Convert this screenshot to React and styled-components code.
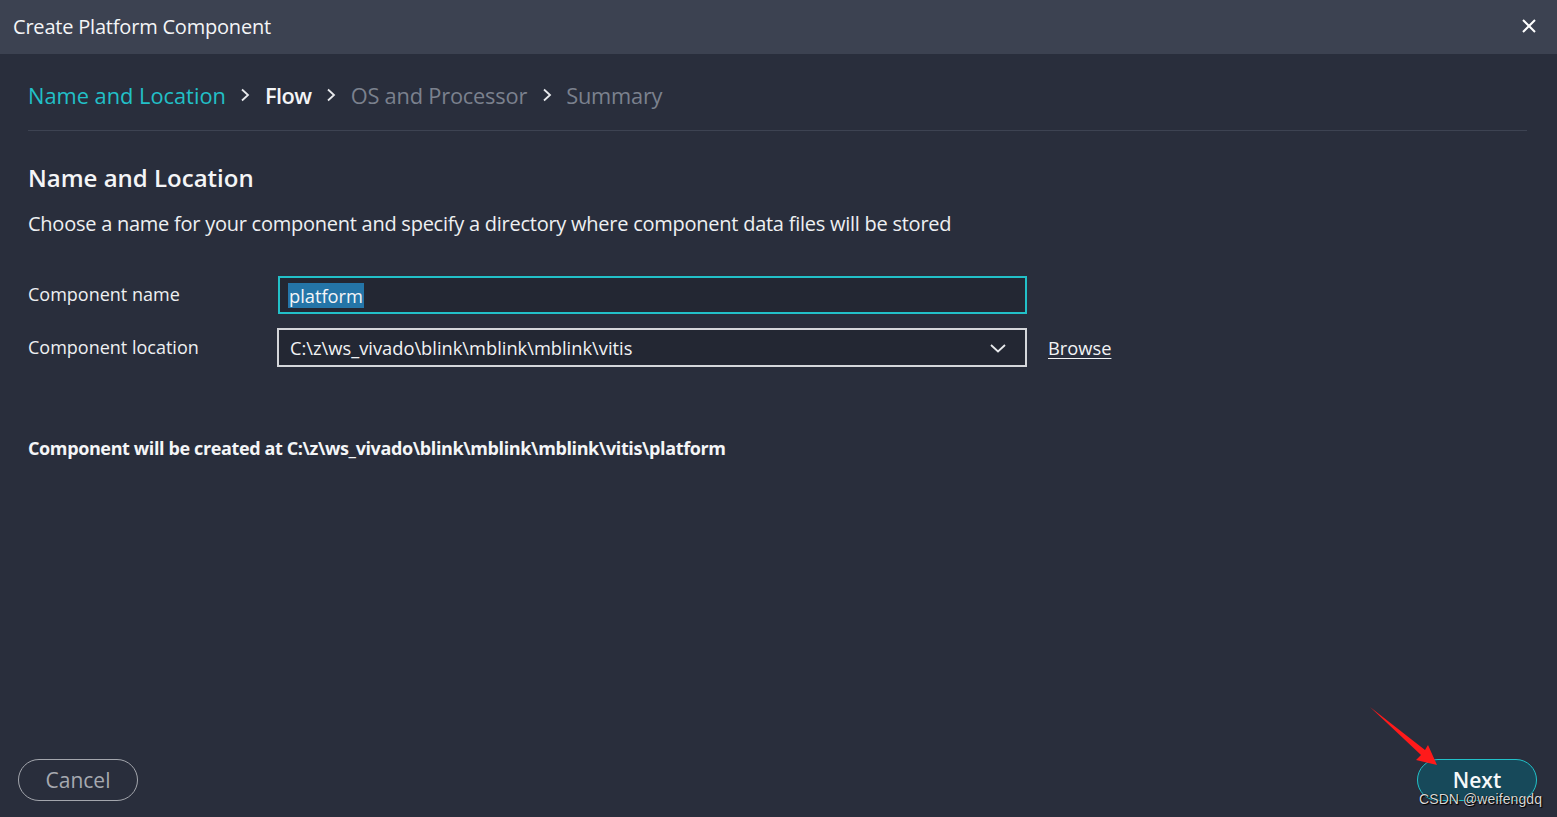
import React from "react";
import styled, { createGlobalStyle } from "styled-components";

const Global = createGlobalStyle`
  html, body { margin: 0; padding: 0; background: #292e3c; }
  body { font-family: "Open Sans", "Noto Sans", sans-serif; color: #f2f3f5; }
  * { box-sizing: border-box; }
`;

const Dialog = styled.div`
  width: 1557px;
  height: 817px;
  display: flex;
  flex-direction: column;
  background: #292e3c;
  position: relative;
  overflow: hidden;
`;

const TitleBar = styled.div`
  height: 54px;
  flex: none;
  background: #3c4251;
  display: flex;
  align-items: center;
  justify-content: space-between;
  padding: 0 18px 0 13px;
`;

const Title = styled.div`
  font-size: 20px;
  color: #f4f5f7;
  letter-spacing: -0.2px;
  margin-top: -2px;
`;

const CloseBtn = styled.div`
  width: 20px;
  height: 20px;
  display: flex;
  align-items: center;
  justify-content: center;
  margin-top: -2px;
`;

const Body = styled.div`
  flex: 1;
  display: flex;
  flex-direction: column;
  padding: 0 30px 0 28px;
`;

const Crumbs = styled.div`
  height: 77px;
  flex: none;
  display: flex;
  align-items: center;
  border-bottom: 1px solid #3d4352;
  padding-top: 6px;
`;

const Crumb = styled.span`
  font-size: 21.8px;
  font-weight: ${(p) => (p.$state === "current" ? 600 : 400)};
  letter-spacing: ${(p) => (p.$state === "done" ? "0" : p.$state === "current" ? "-0.5px" : "-0.2px")};
  color: ${(p) =>
    p.$state === "done" ? "#22c0c8" : p.$state === "current" ? "#f4f5f7" : "#7b818e"};
`;

const Sep = styled.span`
  display: inline-flex;
  width: 39px;
  justify-content: center;
  align-items: center;
`;

const Heading = styled.h2`
  margin: 31px 0 0 0;
  font-size: 24px;
  font-weight: 600;
  color: #f4f5f7;
  line-height: 32px;
`;

const Desc = styled.p`
  margin: 16px 0 0 0;
  font-size: 20px;
  line-height: 28px;
  color: #eef0f2;
  letter-spacing: -0.25px;
`;

const Form = styled.div`
  margin-top: 38px;
  display: grid;
  grid-template-columns: 249px 750px auto;
  row-gap: 14px;
  align-items: center;
`;

const Label = styled.div`
  font-size: 18px;
  color: #eef0f2;
  margin-top: -2px;
`;

const Field = styled.div`
  height: ${(p) => (p.$focused ? "38px" : "39px")};
  margin-left: ${(p) => (p.$focused ? "1px" : "0")};
  width: ${(p) => (p.$focused ? "749px" : "750px")};
  border: 2px solid ${(p) => (p.$focused ? "#22c0c8" : "#d4d6da")};
  background: #232733;
  display: flex;
  align-items: center;
  padding: 0 18px 0 ${(p) => (p.$focused ? "8px" : "11px")};
  font-size: 18.3px;
  color: #f2f3f5;
`;

const Selected = styled.span`
  background: #2475a8;
  color: #f4f5f7;
  padding: 0 1px;
  line-height: 25px;
`;

const FieldText = styled.span`
  flex: 1;
`;

const Browse = styled.a`
  margin-left: 21px;
  font-size: 18.3px;
  color: #f2f3f5;
  text-decoration: underline;
  text-underline-offset: 3px;
`;

const Result = styled.div`
  margin-top: 69px;
  font-size: 18px;
  font-weight: 700;
  color: #f4f5f7;
  letter-spacing: -0.38px;
`;

const Footer = styled.div`
  margin-top: auto;
  height: 58px;
  flex: none;
  display: flex;
  align-items: flex-start;
  justify-content: space-between;
  padding: 0 20px 0 18px;
`;

const Pill = styled.button`
  height: 42px;
  width: 120px;
  border-radius: 21px;
  border: 1px solid ${(p) => (p.$primary ? "#22c0c8" : "#a3a6ad")};
  background: ${(p) => (p.$primary ? "#17495a" : "transparent")};
  color: ${(p) => (p.$primary ? "#f7f8f9" : "#a6a9b0")};
  font-family: "Open Sans", "Noto Sans", sans-serif;
  font-size: 21px;
  font-weight: ${(p) => (p.$primary ? 600 : 400)};
  display: flex;
  align-items: center;
  justify-content: center;
  padding: 0;
`;

const Arrow = styled.svg`
  position: absolute;
  left: 1366px;
  top: 703px;
`;

const Watermark = styled.div`
  position: absolute;
  left: 1419px;
  top: 791px;
  font-family: "Liberation Sans", Arial, sans-serif;
  font-size: 14px;
  color: #d8d8d8;
  text-shadow: 0 0 1px #000, 1px 1px 1px #000;
  letter-spacing: 0.1px;
`;

const Chevron = () => (
  <svg width="12" height="16" viewBox="0 0 12 16" fill="none">
    <path d="M3 2.5 L9 8 L3 13.5" stroke="#e8eaed" strokeWidth="1.8" />
  </svg>
);

export default function App() {
  return (
    <>
      <Global />
      <Dialog>
        <TitleBar>
          <Title>Create Platform Component</Title>
          <CloseBtn>
            <svg width="16" height="16" viewBox="0 0 16 16">
              <path d="M2 2 L14 14 M14 2 L2 14" stroke="#ffffff" strokeWidth="2" />
            </svg>
          </CloseBtn>
        </TitleBar>
        <Body>
          <Crumbs>
            <Crumb $state="done">Name and Location</Crumb>
            <Sep><Chevron /></Sep>
            <Crumb $state="current">Flow</Crumb>
            <Sep><Chevron /></Sep>
            <Crumb>OS and Processor</Crumb>
            <Sep><Chevron /></Sep>
            <Crumb>Summary</Crumb>
          </Crumbs>
          <Heading>Name and Location</Heading>
          <Desc>
            Choose a name for your component and specify a directory where component data files will be stored
          </Desc>
          <Form>
            <Label>Component name</Label>
            <Field $focused>
              <Selected>platform</Selected>
            </Field>
            <span />
            <Label>Component location</Label>
            <Field>
              <FieldText>C:\z\ws_vivado\blink\mblink\mblink\vitis</FieldText>
              <svg width="18" height="12" viewBox="0 0 18 12">
                <path d="M2 3 L9 9.5 L16 3" stroke="#e8eaed" strokeWidth="1.8" fill="none" />
              </svg>
            </Field>
            <Browse>Browse</Browse>
          </Form>
          <Result>Component will be created at C:\z\ws_vivado\blink\mblink\mblink\vitis\platform</Result>
        </Body>
        <Footer>
          <Pill>Cancel</Pill>
          <Pill $primary>Next</Pill>
        </Footer>
        <Arrow width="80" height="70" viewBox="0 0 80 70">
          <path d="M4 4 L59 47 L62 42 L71 62 L50 57 L55 52 Z" fill="#ff1a1a" />
        </Arrow>
        <Watermark>CSDN @weifengdq</Watermark>
      </Dialog>
    </>
  );
}
